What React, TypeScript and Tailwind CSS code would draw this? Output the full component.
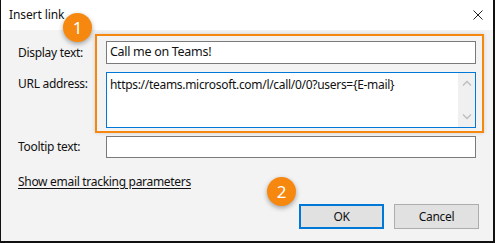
import React from "react";

const font = { fontFamily: '"Noto Sans", "Open Sans", Arial, sans-serif' };

function Badge({ n }: { n: string }) {
  return (
    <div className="flex h-[29px] w-[29px] items-center justify-center rounded-full bg-[#f7880f] text-[17px] leading-none tracking-normal text-white shadow-[0_2px_5px_rgba(0,0,0,0.35)]">
      {n}
    </div>
  );
}

function Chevron({ up }: { up?: boolean }) {
  return (
    <svg width="10" height="6" viewBox="0 0 10 6" fill="none">
      <path
        d={up ? "M1 5.5 L5 1.5 L9 5.5" : "M1 0.5 L5 4.5 L9 0.5"}
        stroke="#bdbdbd"
        strokeWidth="1.3"
      />
    </svg>
  );
}

export default function App() {
  return (
    <div
      className="relative flex h-[243px] w-[495px] flex-col overflow-hidden border-b-2 border-l border-r-2 border-[#111] bg-[#f3f3f3] text-[12px] tracking-[-0.3px] text-[#111]"
      style={font}
    >
      {/* Title bar */}
      <div className="flex h-[30px] shrink-0 items-center justify-between bg-white pl-2 pr-[10px]">
        <span className="text-[12px] tracking-[-0.1px]">Insert link</span>
        <svg width="10" height="10" viewBox="0 0 10 10">
          <path d="M0.5 0.5 L9.5 9.5 M9.5 0.5 L0.5 9.5" stroke="#222" strokeWidth="1" />
        </svg>
      </div>

      {/* Form */}
      <div className="flex flex-1 flex-col pl-[17px] pr-[14px] pt-[11px]">
        <div className="grid grid-cols-[88px_370px] gap-y-2">
          <span className="flex h-[23px] items-center">Display text:</span>
          <div className="flex h-[23px] items-center border border-[#7a7a7a] bg-white px-[3px] text-[12.5px]">
            Call me on Teams!
          </div>

          <span className="pt-[3px]">URL address:</span>
          <div className="flex h-[56px] border border-[#0078d7] bg-white">
            <div className="flex-1 px-[3px] pt-[3px] text-[12px]">
              https://teams.microsoft.com/l/call/0/0?users={"{"}E-mail{"}"}
            </div>
            <div className="flex w-[17px] flex-col items-center justify-between bg-[#f0f0f0] py-[7px]">
              <Chevron up />
              <Chevron />
            </div>
          </div>

          <span className="flex h-[22px] items-center">Tooltip text:</span>
          <div className="h-[22px] border border-[#7a7a7a] bg-white" />
        </div>

        <div className="mt-[15px]">
          <span className="underline underline-offset-2">Show email tracking parameters</span>
        </div>

        <div className="mt-[13px] flex justify-end gap-[10px]">
          <button className="h-[25px] w-[85px] border-2 border-[#0078d7] bg-[#e1e1e1] text-[12px]">
            OK
          </button>
          <button className="h-[25px] w-[85px] border border-[#adadad] bg-[#e1e1e1] text-[12px]">
            Cancel
          </button>
        </div>
      </div>

      {/* Annotations */}
      <div className="pointer-events-none absolute left-[94px] top-[34px] h-[99px] w-[389px] border-2 border-[#f7880f] shadow-[0_0_4px_rgba(0,0,0,0.15)]" />
      <div className="absolute left-[62px] top-[13px]">
        <Badge n="1" />
      </div>
      <div className="absolute left-[266px] top-[177px]">
        <Badge n="2" />
      </div>
    </div>
  );
}
